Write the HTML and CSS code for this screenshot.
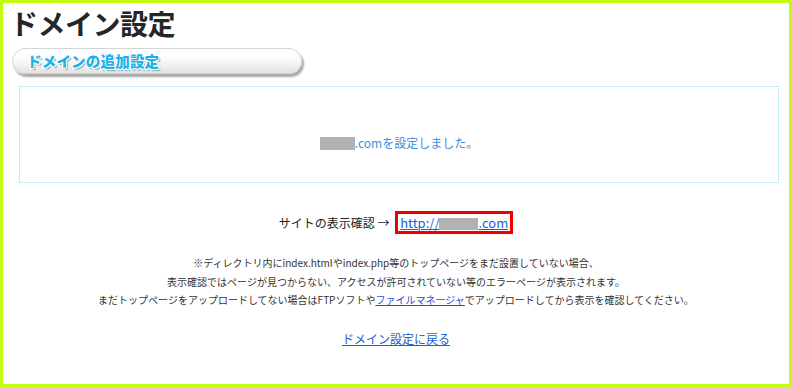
FILE: index.html
```html
<!DOCTYPE html>
<html lang="ja">
<head>
<meta charset="utf-8">
<title>ドメイン設定</title>
<link rel="stylesheet" href="styles.css">
</head>
<body>
<div class="frame">
  <h1 class="title">ドメイン設定</h1>
  <div class="banner"><span class="banner-text">ドメインの追加設定</span></div>
  <div class="result">
    <p class="result-msg"><span class="mask mask-a"></span>.comを設定しました。</p>
  </div>
  <p class="confirm">サイトの表示確認 → <a class="site-link" href="#">http://<span class="mask mask-b"></span>.com</a></p>
  <div class="notes">
    <p>※ディレクトリ内にindex.htmlやindex.php等のトップページをまだ設置していない場合、</p>
    <p>表示確認ではページが見つからない、アクセスが許可されていない等のエラーページが表示されます。</p>
    <p>まだトップページをアップロードしてない場合はFTPソフトや<a href="#" class="fm-link">ファイルマネージャ</a>でアップロードしてから表示を確認してください。</p>
  </div>
  <p class="back"><a href="#" class="back-link">ドメイン設定に戻る</a></p>
</div>
</body>
</html>
```

FILE: styles.css
```css
html, body {
  margin: 0;
  padding: 0;
  background: #ffffff;
}
body {
  font-family: "Noto Sans CJK JP", "Noto Sans", sans-serif;
  color: #333333;
}
.frame {
  box-sizing: border-box;
  width: 792px;
  height: 387px;
  border: 3px solid #c2fb10;
  overflow: hidden;
}
.title {
  margin: 0;
  padding: 2px 0 0 7px;
  font-size: 28px;
  line-height: 36px;
  font-weight: 700;
  color: #262626;
  letter-spacing: -0.5px;
}
.banner {
  margin: 7px 0 0 9px;
  width: 290px;
  height: 26px;
  border-radius: 13px;
  border: 1px solid #d4d4d4;
  background: linear-gradient(#ffffff 0%, #fbfbfb 45%, #e2e2e2 100%);
  box-shadow: 2px 3px 2px #a9a9a9;
  display: flex;
  align-items: center;
  padding-left: 14px;
  box-sizing: border-box;
}
.banner-text {
  font-size: 14.5px;
  font-weight: 900;
  color: #1cb3ea;
  letter-spacing: 0.2px;
  text-shadow: -1px -1px 0 #fff, 1px -1px 0 #fff, -1px 1px 0 #fff, 1px 1px 0 #fff, 2px 2px 1px #8aa;
  line-height: 18px;
}
.result {
  margin: 12px 10px 0 16px;
  border: 1px dotted #a9d3df;
  height: 97px;
  box-sizing: border-box;
  padding-top: 47px;
}
.result-msg {
  margin: 0;
  text-align: center;
  font-size: 12px;
  line-height: 18px;
  color: #3a8fe0;
}
.mask {
  display: inline-block;
  background: #b2b2b2;
  vertical-align: -2px;
}
.mask-a {
  width: 35px;
  height: 13px;
}
.mask-b {
  width: 39px;
  height: 12px;
}
.confirm {
  margin: 28px 0 0 0;
  text-align: center;
  font-size: 12px;
  line-height: 24px;
  color: #222;
}
.site-link {
  display: inline-block;
  border: 3px solid #ee0000;
  padding: 0 2px;
  margin-left: 3px;
  line-height: 17px;
  color: #1b5fd2;
  text-decoration: underline;
  font-size: 13px;
}
.notes {
  margin-top: 19px;
  text-align: center;
  font-size: 10px;
  line-height: 18.5px;
  color: #333;
}
.notes p {
  margin: 0;
}
.fm-link {
  color: #1b4fd4;
  text-decoration: underline;
}
.back {
  margin: 20px 0 0 0;
  text-align: center;
  font-size: 12px;
  line-height: 18px;
}
.back-link {
  color: #1b5fd2;
  text-decoration: underline;
}
```
